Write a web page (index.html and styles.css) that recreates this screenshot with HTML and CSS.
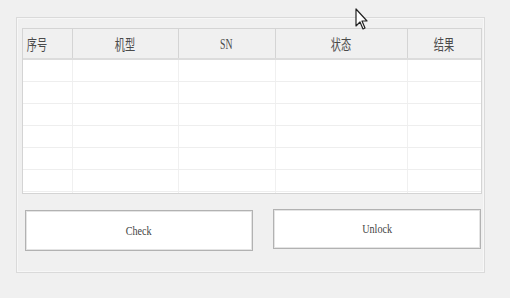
FILE: index.html
```html
<!DOCTYPE html>
<html lang="zh">
<head>
<meta charset="utf-8">
<link rel="stylesheet" href="styles.css">
</head>
<body>
<div class="group">
  <div class="table-wrap">
    <table class="grid">
      <colgroup>
        <col class="c1"><col class="c2"><col class="c3"><col class="c4"><col class="c5">
      </colgroup>
      <thead>
        <tr><th class="left"><span>序号</span></th><th><span>机型</span></th><th><span class="lat">SN</span></th><th><span>状态</span></th><th><span>结果</span></th></tr>
      </thead>
      <tbody>
        <tr><td></td><td></td><td></td><td></td><td></td></tr>
        <tr><td></td><td></td><td></td><td></td><td></td></tr>
        <tr><td></td><td></td><td></td><td></td><td></td></tr>
        <tr><td></td><td></td><td></td><td></td><td></td></tr>
        <tr><td></td><td></td><td></td><td></td><td></td></tr>
        <tr><td></td><td></td><td></td><td></td><td></td></tr>
        <tr><td></td><td></td><td></td><td></td><td></td></tr>
      </tbody>
    </table>
  </div>
  <div class="actions">
    <button class="btn btn-check"><span>Check</span></button>
    <button class="btn btn-unlock"><span>Unlock</span></button>
  </div>
</div>
<svg class="cursor" width="14" height="24" viewBox="0 0 14 24">
  <path d="M1 1 L1 18 L5 14 L8 21 L10 20 L7 13 L12 13 Z" fill="#fff" stroke="#222" stroke-width="1.2" stroke-linejoin="round"/>
</svg>
</body>
</html>
```
FILE: styles.css
```css
html, body {
  margin: 0;
  padding: 0;
  background: #f0f0f0;
  width: 510px;
  height: 298px;
  overflow: hidden;
}
body {
  position: relative;
  font-family: "Noto Sans CJK SC", "Liberation Sans", sans-serif;
}
.group {
  margin: 17px 0 0 16px;
  border: 1px solid #dadada;
  box-shadow: inset 0 0 0 1px #f7f7f7;
  padding: 10px 0 0 5px;
  box-sizing: content-box;
  width: 462px;
  height: 244px;
}
.table-wrap {
  width: 458px;
  height: 164px;
  border: 1px solid #d4d4d4;
  background: #fff;
  overflow: hidden;
}
.grid {
  border-collapse: collapse;
  table-layout: fixed;
  width: 458px;
}
.c1 { width: 49px; }
.c2 { width: 106px; }
.c3 { width: 97px; }
.c4 { width: 132px; }
.c5 { width: 74px; }
.grid th {
  height: 29px;
  padding: 0;
  background: #f0f0f0;
  border-right: 1px solid #d4d4d4;
  border-bottom: 2px solid #dcdcdc;
  font-weight: normal;
  font-size: 12px;
  color: #4a4a4a;
  text-align: center;
}
.grid th:last-child { border-right: none; }
.grid th span {
  display: inline-block;
  transform: scale(0.85, 1.2);
}
.grid th.left { text-align: left; padding-left: 2px; }
.grid th .lat {
  font-family: "Liberation Serif", serif;
  font-size: 13px;
  transform: scale(0.75, 1.1);
}
.grid td {
  height: 21px;
  padding: 0;
  border-right: 1px solid #f0f0f0;
  border-bottom: 1px solid #eeeeee;
}
.grid td:last-child { border-right: none; }
.actions {
  display: flex;
  align-items: flex-start;
  gap: 20px;
  margin-top: 15px;
  padding-left: 3px;
}
.btn {
  background: #fff;
  border: 1px solid #b2b2b2;
  box-shadow: inset 0 0 0 1px #e4e4e4;
  font-family: "Liberation Serif", serif;
  font-size: 13px;
  color: #444;
  padding: 0;
  margin: 0;
}
.btn span {
  display: inline-block;
  transform: scale(0.78, 1);
}
.btn-check {
  width: 228px;
  height: 41px;
  margin-top: 1px;
}
.btn-unlock {
  width: 208px;
  height: 40px;
}
.cursor {
  position: absolute;
  left: 355px;
  top: 8px;
}
```
